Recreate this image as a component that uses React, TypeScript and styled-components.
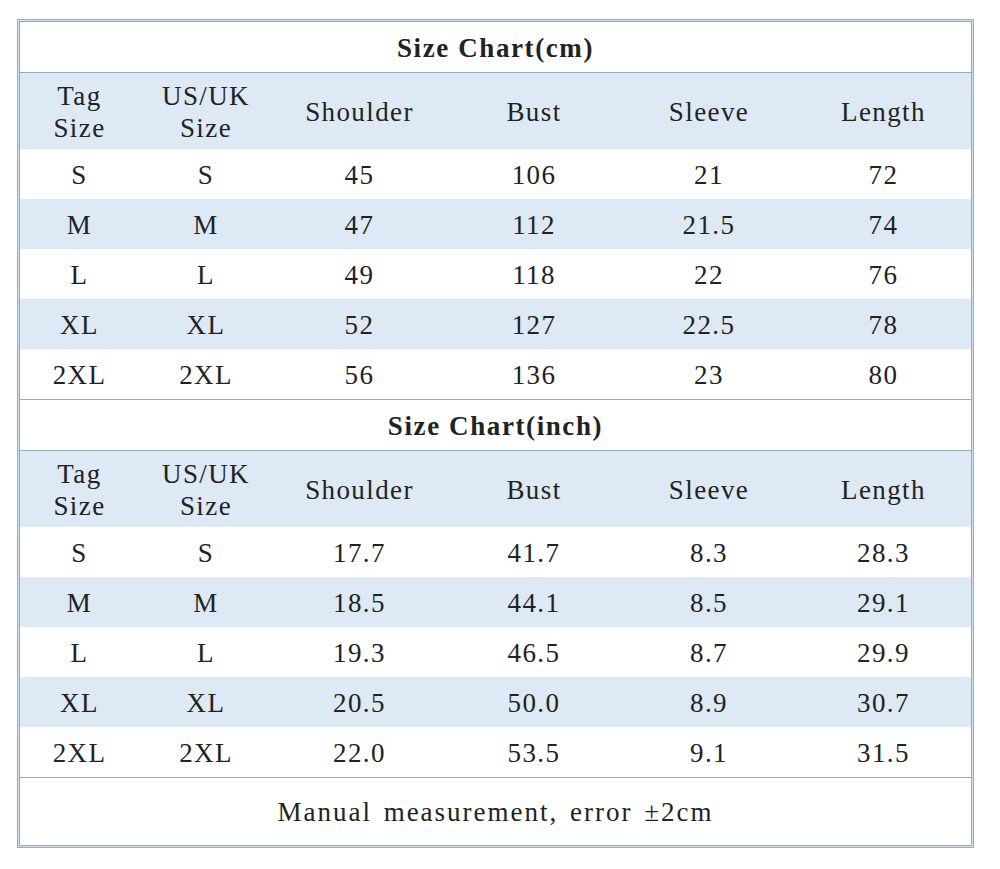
import React from 'react';
import styled, { createGlobalStyle } from 'styled-components';

const GlobalStyle = createGlobalStyle`
    html, body {
        margin: 0;
        padding: 0;
        background: #fff;
    }
    body {
        font-family: 'Liberation Serif', 'Noto Sans CJK SC', serif;
        color: #222;
    }
`;

const Page = styled.div`
    width: 1000px;
    height: 869px;
    padding: 19px 0 0 17px;
    box-sizing: border-box;
`;

const Frame = styled.div`
    width: 957px;
    box-sizing: border-box;
    border: 1px solid #98b0c5;
    padding: 1px;
    background: #cfe1ee;
`;

const Table = styled.div`
    border: 1px solid #8eaac2;
    background: #fff;
`;

const Section = styled.div`
    border-bottom: 1px solid #93acc2;
`;

const Title = styled.div`
    height: 51px;
    padding-top: 2px;
    box-sizing: border-box;
    display: flex;
    align-items: center;
    justify-content: center;
    font-size: 27px;
    font-weight: bold;
    letter-spacing: 1.6px;
    border-bottom: 1px solid #93acc2;
`;

const Row = styled.div<{ $shade?: boolean; $tall?: boolean }>`
    display: grid;
    grid-template-columns: 119px 134px 173px 176px 174px 175px;
    height: ${(p) => (p.$tall ? '76px' : '50px')};
    background: ${(p) => (p.$shade ? '#dde9f5' : '#fff')};
`;

const Cell = styled.div`
    display: flex;
    align-items: center;
    justify-content: center;
    padding-top: 2px;
    text-align: center;
    font-size: 27px;
    line-height: 32px;
    letter-spacing: 1.4px;
`;

const Footer = styled.div`
    height: 67px;
    padding-top: 2px;
    box-sizing: border-box;
    display: flex;
    align-items: center;
    justify-content: center;
    font-size: 27px;
    letter-spacing: 2px;
    word-spacing: 3px;
`;

const headers = [
    <>Tag<br />Size</>,
    <>US/UK<br />Size</>,
    'Shoulder',
    'Bust',
    'Sleeve',
    'Length',
];

const sizes = ['S', 'M', 'L', 'XL', '2XL'];

const cm = [
    ['45', '106', '21', '72'],
    ['47', '112', '21.5', '74'],
    ['49', '118', '22', '76'],
    ['52', '127', '22.5', '78'],
    ['56', '136', '23', '80'],
];

const inch = [
    ['17.7', '41.7', '8.3', '28.3'],
    ['18.5', '44.1', '8.5', '29.1'],
    ['19.3', '46.5', '8.7', '29.9'],
    ['20.5', '50.0', '8.9', '30.7'],
    ['22.0', '53.5', '9.1', '31.5'],
];

const Chart = (props: { title: string; data: string[][] }) => (
    <Section>
        <Title>{props.title}</Title>
        <Row $shade $tall>
            {headers.map((h, i) => (
                <Cell key={i}>{h}</Cell>
            ))}
        </Row>
        {props.data.map((vals, r) => (
            <Row key={r} $shade={r % 2 === 1}>
                <Cell>{sizes[r]}</Cell>
                <Cell>{sizes[r]}</Cell>
                {vals.map((v, i) => (
                    <Cell key={i}>{v}</Cell>
                ))}
            </Row>
        ))}
    </Section>
);

export default function App() {
    return (
        <Page>
            <GlobalStyle />
            <Frame>
                <Table>
                    <Chart title="Size Chart(cm)" data={cm} />
                    <Chart title="Size Chart(inch)" data={inch} />
                    <Footer>Manual measurement, error ±2cm</Footer>
                </Table>
            </Frame>
        </Page>
    );
}
